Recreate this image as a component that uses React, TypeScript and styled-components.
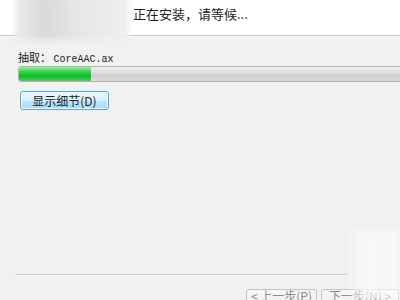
import React from 'react';
import styled, { createGlobalStyle } from 'styled-components';

const Global = createGlobalStyle`
  html, body { margin: 0; padding: 0; background: #f1f1f1; }
  #root { width: 400px; height: 300px; }
`;

const Window = styled.div`
  position: relative;
  width: 400px;
  height: 300px;
  overflow: hidden;
  background: #f1f1f1;
  display: flex;
  flex-direction: column;
  font-family: "Noto Sans CJK SC", "DejaVu Sans", sans-serif;
  color: #222;
`;

const Header = styled.div`
  height: 35px;
  flex: none;
  background: #fff;
  border-bottom: 1px solid #c4c4c4;
  box-shadow: 0 1px 0 #fdfdfd;
  display: flex;
  align-items: flex-start;
`;

const Smudge = styled.div`
  position: absolute;
  left: 15px;
  top: -4px;
  width: 114px;
  height: 44px;
  background: linear-gradient(90deg, #ebebeb 0%, #d9d9d9 25%, #e6e6e6 55%, #efefef 100%);
  filter: blur(3px);
`;

const Title = styled.div`
  margin-left: 133px;
  margin-top: 5px;
  font-size: 13px;
  line-height: 18px;
  color: #1e1e1e;
`;

const Body = styled.div`
  flex: 1;
  display: flex;
  flex-direction: column;
  padding: 14px 0 0 18px;
`;

const Label = styled.div`
  font-size: 11px;
  line-height: 14px;
  height: 14px;
  color: #222;
  span {
    font-family: "Liberation Mono", monospace;
    font-size: 10px;
  }
`;

const Track = styled.div`
  margin-top: 2px;
  width: 400px;
  height: 14px;
  border: 1px solid #b2b2b2;
  border-radius: 3px;
  background: linear-gradient(#efefef 0%, #dedede 40%, #cfcfcf 60%, #dcdcdc 100%);
  display: flex;
`;

const Fill = styled.div<{ $pct: number }>`
  width: ${p => p.$pct}%;
  height: 100%;
  border-radius: 2px 0 0 2px;
  background: linear-gradient(#a6e8a8 0%, #37d04a 35%, #0fb92a 65%, #48d058 100%);
`;

const DetailButton = styled.button`
  margin: 9px 0 0 2px;
  width: 89px;
  height: 19px;
  padding: 0;
  border: 1px solid #5aa2d0;
  border-radius: 3px;
  background: linear-gradient(#eaf6fd 0%, #d9f0fc 50%, #bee6fd 51%, #a7d9f5 100%);
  box-shadow: inset 0 0 0 1px #f4fbff;
  font-family: "Noto Sans CJK SC", sans-serif;
  font-size: 12px;
  line-height: 17px;
  color: #222;
`;

const Separator = styled.div`
  flex: none;
  margin-left: 15px;
  width: 333px;
  height: 1px;
  background: #c8c8c8;
  border-bottom: 1px solid #fbfbfb;
`;

const Footer = styled.div`
  flex: none;
  height: 22px;
  margin: 13px 0 -11px;
  display: flex;
  justify-content: flex-end;
  align-items: flex-start;
  gap: 4px;
  padding-right: 1px;
`;

const NavButton = styled.button<{ $w: number }>`
  width: ${p => p.$w}px;
  height: 22px;
  padding: 0;
  border: 1px solid #c3c3c3;
  border-radius: 3px;
  background: linear-gradient(#f7f7f7, #ececec);
  font-family: "Noto Sans CJK SC", sans-serif;
  font-size: 12px;
  line-height: 12px;
  display: flex;
  align-items: flex-start;
  justify-content: center;
  padding-top: 0;
  color: #8a8a8a;
`;

const Glare = styled.div`
  position: absolute;
  right: 0;
  bottom: 0;
  width: 54px;
  height: 70px;
  background: linear-gradient(90deg, rgba(250,250,250,0) 0%, rgba(250,250,250,0.7) 30%, rgba(252,252,252,0.6) 100%);
  filter: blur(2px);
`;

export default function App() {
  return (
    <>
      <Global />
      <Window>
        <Header>
          <Title>正在安装，请等候...</Title>
        </Header>
        <Smudge />
        <Body>
          <Label>抽取： <span>CoreAAC.ax</span></Label>
          <Track>
            <Fill $pct={18} />
          </Track>
          <DetailButton>显示细节(D)</DetailButton>
        </Body>
        <Separator />
        <Footer>
          <NavButton $w={71}>&lt; 上一步(P)</NavButton>
          <NavButton $w={78}>下一步(N) &gt;</NavButton>
        </Footer>
        <Glare />
      </Window>
    </>
  );
}
